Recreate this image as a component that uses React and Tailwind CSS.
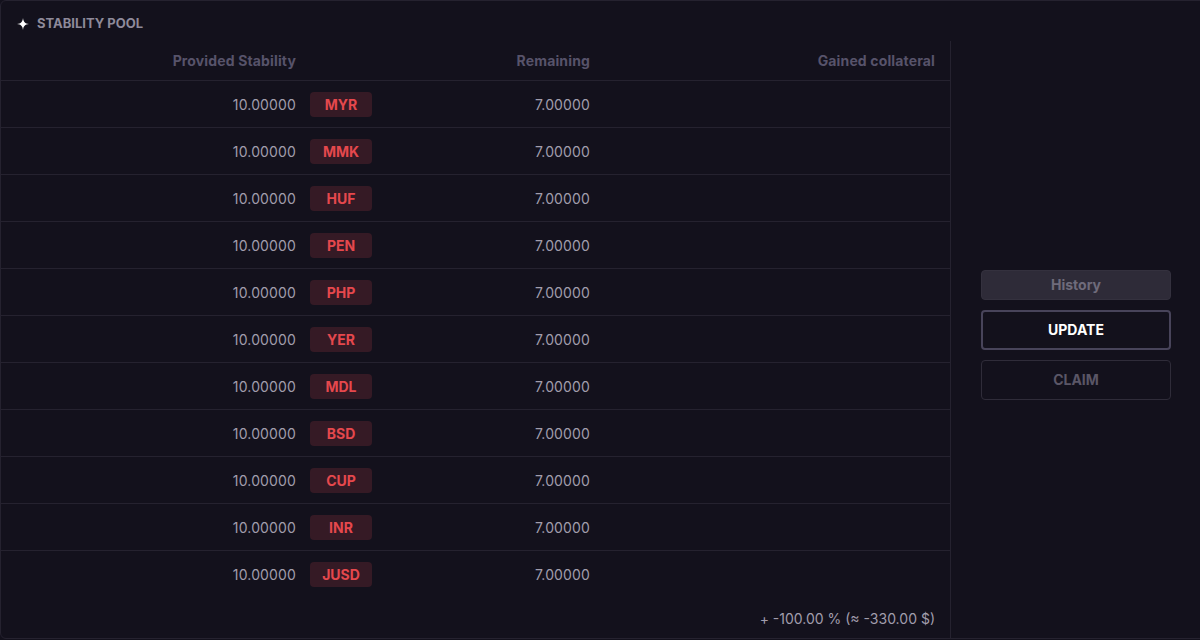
const rows = ["MYR", "MMK", "HUF", "PEN", "PHP", "YER", "MDL", "BSD", "CUP", "INR", "JUSD"];

const Sparkle = () => (
  <svg width="12" height="12" viewBox="0 0 12 12" className="shrink-0">
    <path d="M6 0 C6.6 4.2 7.8 5.4 12 6 C7.8 6.6 6.6 7.8 6 12 C5.4 7.8 4.2 6.6 0 6 C4.2 5.4 5.4 4.2 6 0 Z" fill="#ffffff" />
  </svg>
);

const StabilityPool = () => {
  return (
    <div className="w-full h-[640px] overflow-hidden bg-[#13111c]">
      <div
        className="w-[1210px] h-[639px] flex flex-col border border-[#25222f] rounded-md bg-[#13111c]"
        style={{ fontFamily: "Inter, 'Noto Sans', sans-serif" }}
      >
        <div className="h-[40px] flex items-center gap-[8px] pl-[16px] pt-[5px]">
          <Sparkle />
          <span className="text-[13px] font-bold uppercase text-[#8e8a9a]">Stability Pool</span>
        </div>

        <div className="flex flex-1 min-h-0">
          <div className="w-[950px] border-r border-[#25222f] flex flex-col">
            <div className="grid grid-cols-[302px_77px_218px_1fr] h-[40px] items-center border-b border-[#25222f] text-[14px] font-bold tracking-[0.01em] text-[#57536a]">
              <div className="text-right pr-[7px]">Provided Stability</div>
              <div></div>
              <div className="text-right pr-[8px]">Remaining</div>
              <div className="text-right pr-[15px]">Gained collateral</div>
            </div>

            {rows.map((code, i) => (
              <div
                key={code}
                className={
                  i < rows.length - 1
                    ? "grid grid-cols-[302px_77px_218px_1fr] h-[47px] items-center border-b border-[#25222f]"
                    : "grid grid-cols-[302px_77px_218px_1fr] h-[47px] items-center"
                }
              >
                <div className="text-right pr-[7px] text-[14px] tracking-[0.01em] text-[#a19dac]">10.00000</div>
                <div className="pl-[7px]">
                  <div className="w-[62px] h-[25px] rounded-[4px] bg-[#351a25] flex items-center justify-center text-[14px] font-bold text-[#e5484d]">
                    {code}
                  </div>
                </div>
                <div className="text-right pr-[8px] text-[14px] tracking-[0.01em] text-[#a19dac]">7.00000</div>
                <div></div>
              </div>
            ))}

            <div className="flex-1 flex items-center justify-end pr-[15px] text-[14px] text-[#a19dac]">
              + -100.00 % (≈ -330.00 $)
            </div>
          </div>

          <div className="w-[250px] flex flex-col justify-center gap-[10px] pr-[30px] pl-[30px] pb-[10px]">
            <button className="h-[30px] rounded-[4px] bg-[#2e2b38] border border-[#34313e] text-[14px] font-bold text-[#6f6b7b]">
              History
            </button>
            <button className="h-[40px] rounded-[4px] border-2 border-[#48445a] text-[14px] font-bold text-white uppercase">
              Update
            </button>
            <button className="h-[40px] rounded-[4px] border border-[#2f2c39] text-[14px] font-bold text-[#5a5666] uppercase">
              Claim
            </button>
          </div>
        </div>
      </div>
    </div>
  );
};

export default function App() {
  return <StabilityPool />;
}
